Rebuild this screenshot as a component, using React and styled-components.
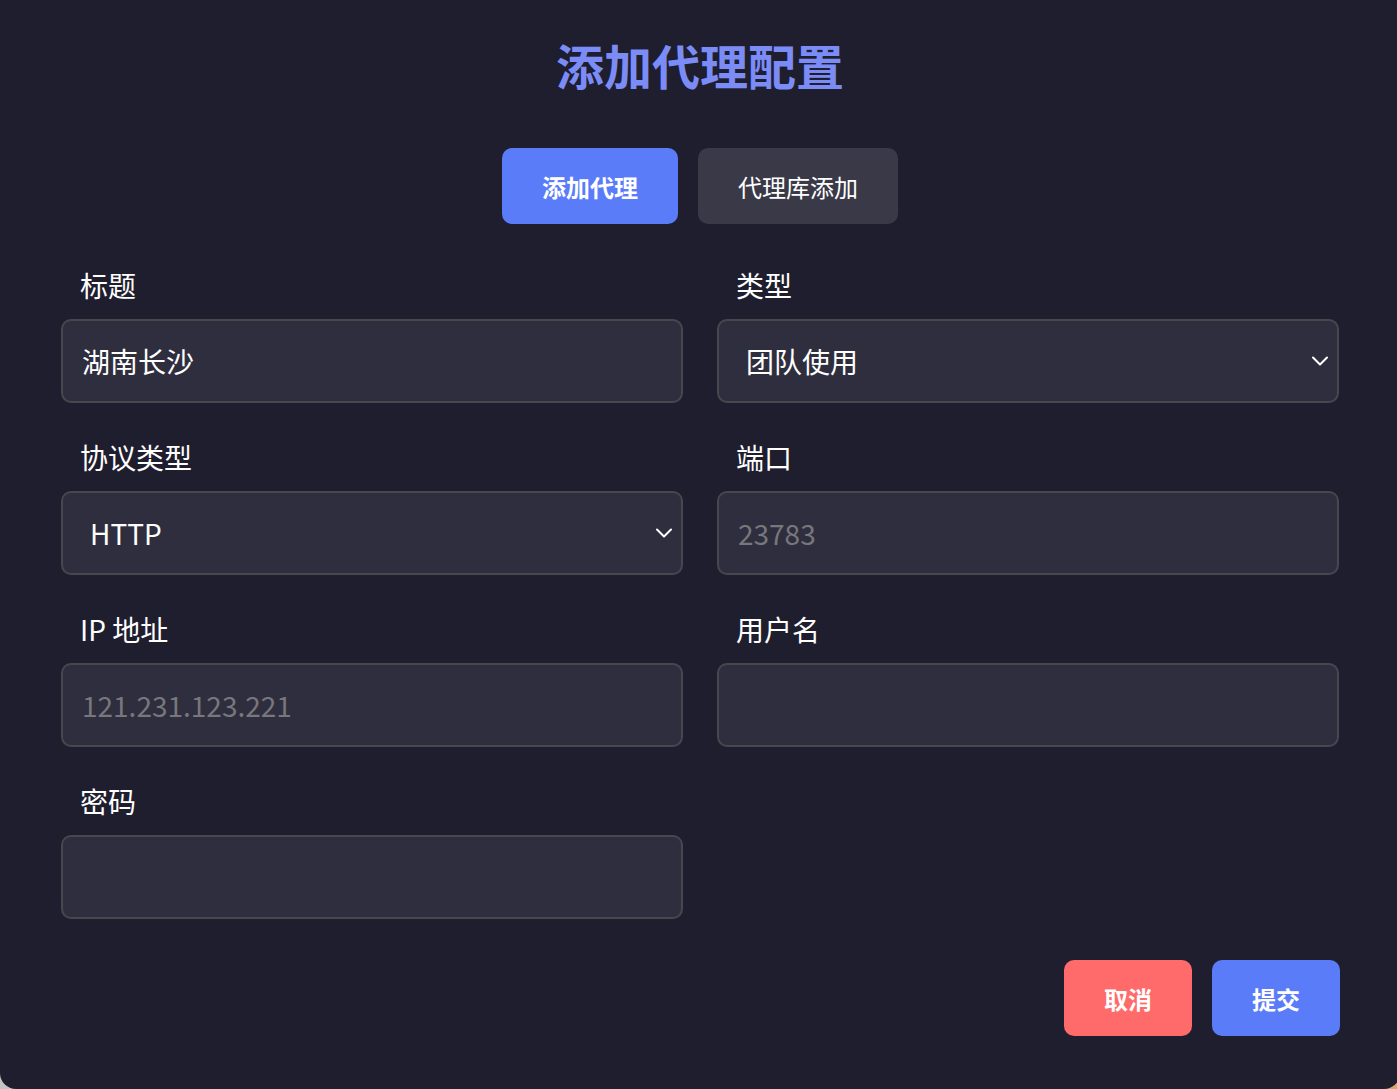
import React, { useState } from 'react';
import styled, { createGlobalStyle, css } from 'styled-components';

const GlobalStyle = createGlobalStyle`
    html, body {
        margin: 0;
        padding: 0;
        overflow: hidden;
        background: linear-gradient(to right, #c4c4c4, #d8a868);
    }
    * { box-sizing: border-box; }
`;

const colors = {
    page: '#1f1e2e',
    field: '#2f2e3e',
    border: '#47474d',
    tab: '#3a3948',
    primary: '#5b7cf9',
    title: '#7b8cf7',
    danger: '#ff6b6b',
    text: '#ffffff',
    muted: '#77777c',
};

const Modal = styled.div`
    width: 1400px;
    height: 1089px;
    padding: 32px 61px 0;
    background: ${colors.page};
    border-radius: 0 0 16px 16px;
    font-family: 'Noto Sans CJK SC', 'Noto Sans', sans-serif;
    color: ${colors.text};
    display: flex;
    flex-direction: column;
`;

const Title = styled.h1`
    margin: 0;
    font-size: 48px;
    line-height: 64px;
    font-weight: 700;
    text-align: center;
    color: ${colors.title};
`;

const Tabs = styled.div`
    display: flex;
    justify-content: center;
    gap: 20px;
    margin-top: 52px;
`;

const Tab = styled.button`
    height: 76px;
    padding: 0 40px;
    border: none;
    border-radius: 10px;
    font-family: inherit;
    font-size: 24px;
    color: ${colors.text};
    background: ${colors.tab};
    cursor: pointer;
    ${props => props.active && css`
        background: ${colors.primary};
        font-weight: 700;
    `}
`;

const Form = styled.div`
    display: grid;
    grid-template-columns: 1fr 1fr;
    column-gap: 34px;
    row-gap: 36px;
    margin-top: 43px;
`;

const Field = styled.div`
    display: flex;
    flex-direction: column;
    gap: 16px;
`;

const Label = styled.label`
    padding-left: 19px;
    font-size: 28px;
    line-height: 36px;
`;

const fieldBox = css`
    width: 100%;
    height: 84px;
    border: 2px solid ${colors.border};
    border-radius: 10px;
    background: ${colors.field};
    color: ${colors.text};
    font-family: inherit;
    font-size: 28px;
    outline: none;
`;

const Input = styled.input`
    ${fieldBox}
    padding: 0 19px;
    &::placeholder { color: ${colors.muted}; }
`;

const SelectWrap = styled.div`
    position: relative;
`;

const Select = styled.select`
    ${fieldBox}
    appearance: none;
    padding: 0 60px 0 27px;
`;

const Chevron = styled.svg`
    position: absolute;
    right: 9px;
    top: 50%;
    width: 20px;
    height: 20px;
    transform: translateY(-50%);
    pointer-events: none;
`;

const Actions = styled.div`
    display: flex;
    justify-content: flex-end;
    gap: 20px;
    margin-top: 41px;
    margin-right: -1px;
`;

const ActionButton = styled.button`
    width: 128px;
    height: 76px;
    border: none;
    border-radius: 10px;
    font-family: inherit;
    font-size: 24px;
    font-weight: 700;
    color: ${colors.text};
    background: ${props => props.danger ? colors.danger : colors.primary};
    cursor: pointer;
`;

const SelectField = ({ label, value, options }) => (
    <Field>
        <Label>{label}</Label>
        <SelectWrap>
            <Select defaultValue={value}>
                {options.map(o => <option key={o}>{o}</option>)}
            </Select>
            <Chevron viewBox="0 0 20 20" fill="none">
                <path d="M3 6.5 L10 13.5 L17 6.5" stroke="#ffffff" strokeWidth="2" strokeLinecap="round" strokeLinejoin="round" />
            </Chevron>
        </SelectWrap>
    </Field>
);

const TextField = ({ label, value, placeholder }) => (
    <Field>
        <Label>{label}</Label>
        <Input defaultValue={value} placeholder={placeholder} />
    </Field>
);

const App = () => {
    const [tab, setTab] = useState(0);

    return (
        <>
            <GlobalStyle />
            <Modal>
                <Title>添加代理配置</Title>
                <Tabs>
                    <Tab active={tab === 0} onClick={() => setTab(0)}>添加代理</Tab>
                    <Tab active={tab === 1} onClick={() => setTab(1)}>代理库添加</Tab>
                </Tabs>
                <Form>
                    <TextField label="标题" value="湖南长沙" />
                    <SelectField label="类型" value="团队使用" options={['团队使用', '个人使用']} />
                    <SelectField label="协议类型" value="HTTP" options={['HTTP', 'HTTPS', 'SOCKS5']} />
                    <TextField label="端口" placeholder="23783" />
                    <TextField label="IP 地址" placeholder="121.231.123.221" />
                    <TextField label="用户名" />
                    <TextField label="密码" />
                </Form>
                <Actions>
                    <ActionButton danger>取消</ActionButton>
                    <ActionButton>提交</ActionButton>
                </Actions>
            </Modal>
        </>
    );
};

export default App;
